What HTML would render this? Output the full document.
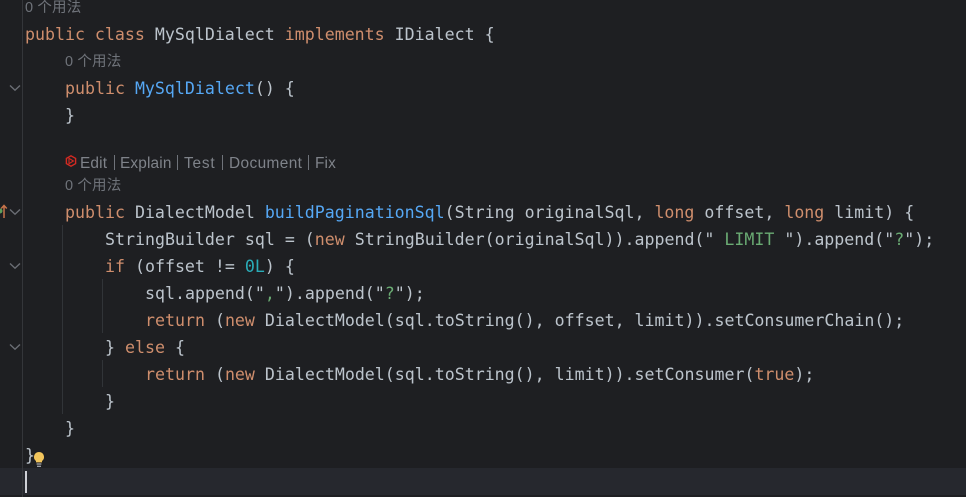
<!DOCTYPE html>
<html><head><meta charset="utf-8">
<style>
html,body{margin:0;padding:0;background:#1e1f22;}
#r{position:relative;width:966px;height:497px;overflow:hidden;background:#1e1f22;}
.l{position:absolute;left:25px;height:27px;line-height:27px;white-space:pre;font-family:"DejaVu Sans Mono","Liberation Mono",monospace;font-size:16.6px;color:#bcc4cc;letter-spacing:0;}
.k{color:#cf8e6d}.f{color:#56a8f5}.s{color:#6aab73}.n{color:#2aacb8}
.h{position:absolute;white-space:pre;font-family:"Liberation Sans","Noto Sans CJK SC",sans-serif;font-size:14.5px;letter-spacing:.15px;line-height:20px;height:20px;color:#6f737a;}
.c{position:absolute;white-space:pre;font-family:"Liberation Sans",sans-serif;font-size:15.4px;letter-spacing:.15px;line-height:20px;height:20px;color:#7f838a;}
.g{position:absolute;width:1px;background:#313438;}
.i{position:absolute;}
</style></head><body><div id="r">
<div style="position:absolute;left:0;top:468px;width:966px;height:27px;background:#26282e"></div>
<div class="g" style="left:22px;top:0;height:497px;background:#34363a"></div>
<div class="g" style="left:62px;top:225px;height:189px"></div>
<div class="g" style="left:102px;top:279px;height:54px"></div>
<div class="g" style="left:102px;top:360px;height:27px"></div>

<div class="h" style="left:25px;top:-2px">0 个用法</div>
<div class="l" style="top:21px"><span class="k">public class </span>MySqlDialect <span class="k">implements </span>IDialect {</div>
<div class="h" style="left:65px;top:52px">0 个用法</div>
<div class="l" style="top:75px;left:65px"><span class="k">public </span><span class="f">MySqlDialect</span>() {</div>
<div class="l" style="top:102px;left:65px">}</div>

<svg class="i" style="left:65px;top:155px" width="12" height="12" viewBox="0 0 12 12"><path d="M6 .8 10.6 3.4V8.6L6 11.2 1.4 8.6V3.4Z" fill="none" stroke="#d42a22" stroke-width="1.4"/><path d="M4 3.3 8.4 6 4 8.7Z" fill="none" stroke="#d42a22" stroke-width="1.1"/></svg>
<div class="c" style="left:80px;top:154px">Edit</div>
<div class="c" style="left:120px;top:154px">Explain</div>
<div class="c" style="left:184px;top:154px;letter-spacing:.8px">Test</div>
<div class="c" style="left:229px;top:154px;letter-spacing:.4px">Document</div>
<div class="c" style="left:315px;top:154px">Fix</div>
<div class="g" style="left:114px;top:155px;height:15px;background:#6f737a"></div>
<div class="g" style="left:177px;top:155px;height:15px;background:#6f737a"></div>
<div class="g" style="left:222px;top:155px;height:15px;background:#6f737a"></div>
<div class="g" style="left:308px;top:155px;height:15px;background:#6f737a"></div>

<div class="h" style="left:65px;top:176px">0 个用法</div>
<div class="l" style="top:199px;left:65px"><span class="k">public </span>DialectModel <span class="f">buildPaginationSql</span>(String originalSql, <span class="k">long </span>offset, <span class="k">long </span>limit) {</div>
<div class="l" style="top:226px;left:105px">StringBuilder sql = (<span class="k">new </span>StringBuilder(originalSql)).append(" <span class="s">LIMIT</span> ").append("<span class="s">?</span>");</div>
<div class="l" style="top:253px;left:105px"><span class="k">if </span>(offset != <span class="n">0L</span>) {</div>
<div class="l" style="top:280px;left:145px">sql.append("<span class="s">,</span>").append("<span class="s">?</span>");</div>
<div class="l" style="top:307px;left:145px"><span class="k">return </span>(<span class="k">new </span>DialectModel(sql.toString(), offset, limit)).setConsumerChain();</div>
<div class="l" style="top:334px;left:105px">} <span class="k">else </span>{</div>
<div class="l" style="top:361px;left:145px"><span class="k">return </span>(<span class="k">new </span>DialectModel(sql.toString(), limit)).setConsumer(<span class="k">true</span>);</div>
<div class="l" style="top:388px;left:105px">}</div>
<div class="l" style="top:415px;left:65px">}</div>
<div class="l" style="top:442px;left:25px">}</div>

<svg class="i" style="left:9px;top:84px" width="12" height="8" viewBox="0 0 12 8"><path d="M1 1.5 6 6.2 11 1.5" fill="none" stroke="#6b6e75" stroke-width="1.4"/></svg>
<svg class="i" style="left:9px;top:208px" width="12" height="8" viewBox="0 0 12 8"><path d="M1 1.5 6 6.2 11 1.5" fill="none" stroke="#6b6e75" stroke-width="1.4"/></svg>
<svg class="i" style="left:9px;top:262px" width="12" height="8" viewBox="0 0 12 8"><path d="M1 1.5 6 6.2 11 1.5" fill="none" stroke="#6b6e75" stroke-width="1.4"/></svg>
<svg class="i" style="left:9px;top:343px" width="12" height="8" viewBox="0 0 12 8"><path d="M1 1.5 6 6.2 11 1.5" fill="none" stroke="#6b6e75" stroke-width="1.4"/></svg>

<svg class="i" style="left:0;top:203px" width="8" height="16" viewBox="0 0 8 16"><circle cx="0" cy="8" r="2.5" fill="#5f9e5a"/><path d="M4 15V3M1.2 5.5 4 2.5 6.8 5.5" fill="none" stroke="#c7744a" stroke-width="1.5"/></svg>

<svg class="i" style="left:33px;top:451px" width="12" height="17" viewBox="0 0 12 17"><path d="M6 1A5 5 0 0 1 9 10V11.4H3V10A5 5 0 0 1 6 1Z" fill="#f2c55c"/><path d="M3.6 13H8.4M4 15.2H8" stroke="#c9cbcf" stroke-width="1"/></svg>

<div style="position:absolute;left:25px;top:471px;width:2px;height:22px;background:#ced0d6"></div>
</div></body></html>
